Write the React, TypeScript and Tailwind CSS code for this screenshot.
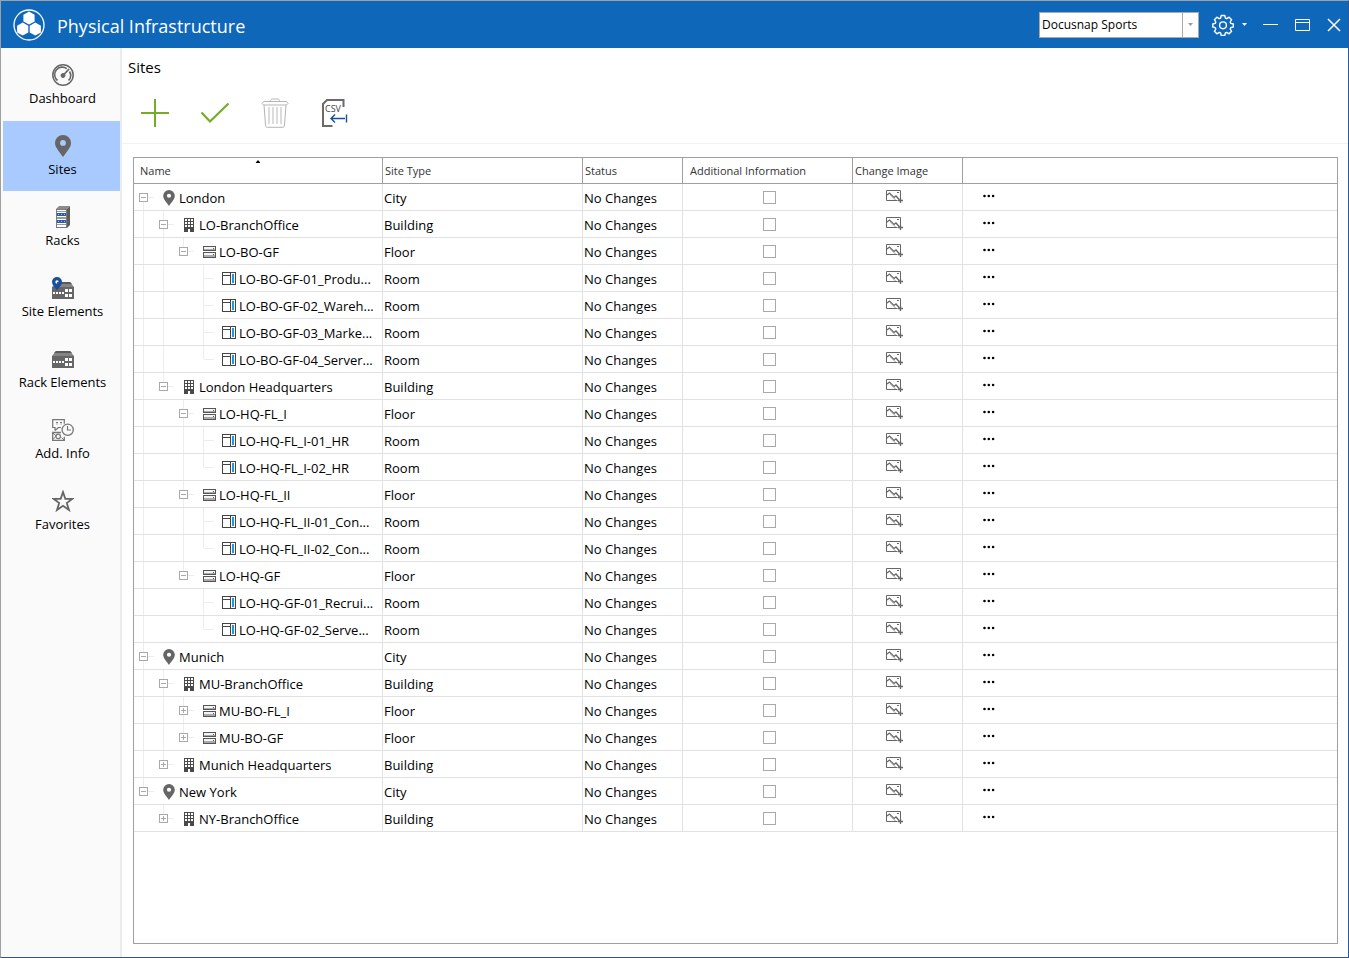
import type { ReactNode } from "react"
import clsx from "clsx"

type Kind = "City" | "Building" | "Floor" | "Room"

interface Site {
  name: string
  kind: Kind
  level: number
  expanded?: boolean
}

const sites: Site[] = [
  { name: "London", kind: "City", level: 0, expanded: true },
  { name: "LO-BranchOffice", kind: "Building", level: 1, expanded: true },
  { name: "LO-BO-GF", kind: "Floor", level: 2, expanded: true },
  { name: "LO-BO-GF-01_Produ...", kind: "Room", level: 3 },
  { name: "LO-BO-GF-02_Wareh...", kind: "Room", level: 3 },
  { name: "LO-BO-GF-03_Marke...", kind: "Room", level: 3 },
  { name: "LO-BO-GF-04_Server...", kind: "Room", level: 3 },
  { name: "London Headquarters", kind: "Building", level: 1, expanded: true },
  { name: "LO-HQ-FL_I", kind: "Floor", level: 2, expanded: true },
  { name: "LO-HQ-FL_I-01_HR", kind: "Room", level: 3 },
  { name: "LO-HQ-FL_I-02_HR", kind: "Room", level: 3 },
  { name: "LO-HQ-FL_II", kind: "Floor", level: 2, expanded: true },
  { name: "LO-HQ-FL_II-01_Con...", kind: "Room", level: 3 },
  { name: "LO-HQ-FL_II-02_Con...", kind: "Room", level: 3 },
  { name: "LO-HQ-GF", kind: "Floor", level: 2, expanded: true },
  { name: "LO-HQ-GF-01_Recrui...", kind: "Room", level: 3 },
  { name: "LO-HQ-GF-02_Serve...", kind: "Room", level: 3 },
  { name: "Munich", kind: "City", level: 0, expanded: true },
  { name: "MU-BranchOffice", kind: "Building", level: 1, expanded: true },
  { name: "MU-BO-FL_I", kind: "Floor", level: 2, expanded: false },
  { name: "MU-BO-GF", kind: "Floor", level: 2, expanded: false },
  { name: "Munich Headquarters", kind: "Building", level: 1, expanded: false },
  { name: "New York", kind: "City", level: 0, expanded: true },
  { name: "NY-BranchOffice", kind: "Building", level: 1, expanded: false },
]

// true when a later sibling follows on the given level
function continues(index: number, level: number) {
  for (let i = index + 1; i < sites.length; i++) {
    if (sites[i].level < level) return false
    if (sites[i].level === level) return true
  }
  return false
}

function Logo() {
  return (
    <svg width="32" height="32" viewBox="0 0 32 32" aria-hidden="true">
      <circle cx="16" cy="16" r="15" fill="none" stroke="#fff" strokeWidth="1.3" />
      <g fill="#fff">
        <path d="M16 2.6l5.6 3.2v6.6L16 15.6l-5.6-3.2V5.800z" />
        <path d="M9.700 13.600l5.600 3.200v6.600l-5.600 3.200-5.600-3.200v-6.600z" />
        <path d="M22.300 13.600l5.600 3.200v6.600l-5.600 3.200-5.600-3.200v-6.600z" />
      </g>
    </svg>
  )
}

function GearIcon() {
  return (
    <svg width="22" height="22" viewBox="0 0 22 22" fill="none" stroke="#fff" strokeWidth="1.4" strokeLinejoin="round" aria-hidden="true">
      <path d="M9.200 1.500h3.600l.6 2.600 1.400.6 2.300-1.500 2.500 2.500-1.400 2.300.6 1.400 2.500.6v3l-2.500.6-.6 1.400 1.400 2.300-2.500 2.500-2.300-1.400-1.400.6-.6 2.500H9.200l-.6-2.500-1.400-.6-2.300 1.400-2.500-2.500 1.400-2.300-.6-1.400-2.400-.6v-3l2.400-.6.6-1.400-1.400-2.300 2.500-2.500 2.300 1.500 1.400-.6z" />
      <circle cx="11" cy="11.300" r="3.400" />
    </svg>
  )
}

function PinIcon({ className }: { className?: string }) {
  return (
    <svg className={className} viewBox="0 0 16 22" fill="#666" aria-hidden="true">
      <path fillRule="evenodd" d="M8 0a8 8 0 0 1 8 8c0 4.500-4.500 9-8 14C4.500 17 0 12.500 0 8a8 8 0 0 1 8-8zm0 5a2.900 2.900 0 1 0 0 5.800A2.900 2.900 0 0 0 8 5z" />
    </svg>
  )
}

function DashboardIcon() {
  return (
    <svg width="22" height="22" viewBox="0 0 22 22" fill="none" stroke="#666" aria-hidden="true">
      <circle cx="11" cy="11" r="10.200" strokeWidth="1.500" />
      <path d="M5.500 16.500A7.400 7.400 0 0 1 14.800 4.700M17.500 7.500a7.400 7.400 0 0 1-1 9" strokeWidth="1.600" />
      <path d="M11 11.500L17 5" strokeWidth="1.800" />
      <circle cx="11" cy="11.500" r="2" fill="#666" strokeWidth="1" />
    </svg>
  )
}

function RacksIcon() {
  return (
    <svg width="16" height="22" viewBox="0 0 16 22" aria-hidden="true">
      <path d="M1 3l3-3h11l-3 3z" fill="#8c8c8c" />
      <path d="M12 3l3-3v19l-3 3z" fill="#5c5c5c" />
      <path d="M1 3h11v19H1z" fill="#7a7a7a" />
      <path d="M2 4h9v17H2z" fill="#fff" />
      <path d="M2 7h9v3H2zM2 14h9v3H2z" fill="#2b5caa" />
      <path d="M3 8h1v1H3zM6 8h1v1H6zM9 8h1v1H9zM3 15h1v1H3zM6 15h1v1H6zM9 15h1v1H9z" fill="#9dbbe8" />
      <path d="M2 5h9v1H2zM2 11h9v2H2zM2 18h9v1H2z" fill="#999" />
    </svg>
  )
}

function DeviceShape() {
  return (
    <>
      <path d="M0 9l4-5h14l4 5z" fill="#858585" />
      <path d="M4 4h14l2 2H2z" fill="#5a5a5a" />
      <path d="M0 9h22v12H0z" fill="#666" />
      <path d="M1 14h2v2H1zM4 14h2v2H4zM7 14h2v2H7zM10 14h2v2h-2zM13 11h3v3h-3zM17 11h3v3h-3zM13 16h3v3h-3zM17 16h3v3h-3z" fill="#fff" />
    </>
  )
}

function SiteElementsIcon() {
  return (
    <svg width="22" height="22" viewBox="0 0 22 22" aria-hidden="true">
      <g transform="translate(0 1)">
        <DeviceShape />
      </g>
      <path d="M0 0h5v9H0z" fill="#fafafa" />
      <path fillRule="evenodd" d="M5 0a5 5 0 0 1 5 5c0 3-3 5.500-5 8.500C3 10.500 0 8 0 5a5 5 0 0 1 5-5zm0 3.300a1.700 1.700 0 1 0 0 3.400 1.700 1.700 0 0 0 0-3.400z" fill="#174f9e" />
    </svg>
  )
}

function RackElementsIcon() {
  return (
    <svg width="22" height="22" viewBox="0 0 22 22" aria-hidden="true">
      <g transform="translate(0 -1)">
        <DeviceShape />
      </g>
    </svg>
  )
}

function AddInfoIcon() {
  return (
    <svg width="22" height="22" viewBox="0 0 22 22" fill="none" stroke="#777" aria-hidden="true">
      <path d="M3 11.500V8.500H.7V.7h11.600v4M6.500 8.500L3 11.500M6.500 8.500H9" strokeWidth="1.200" />
      <path d="M4 3.500h2M8 3.500h2M4.500 5h1M8.500 5h1" />
      <path d="M9 13.500H.7v7.800h11.600v-3.500" strokeWidth="1.300" />
      <path d="M1 14l3 3-3 3.500M12 21l-2.500-2.500" />
      <circle cx="6.200" cy="17.400" r="2.200" strokeWidth="1.200" />
      <circle cx="15.700" cy="10.800" r="5.600" fill="#fafafa" strokeWidth="1.300" />
      <path d="M15.500 7v4h3.500" strokeWidth="1.200" />
    </svg>
  )
}

function StarIcon() {
  return (
    <svg width="22" height="22" viewBox="0 0 22 22" fill="none" stroke="#666" strokeWidth="1.800" aria-hidden="true">
      <path d="M11 2l2.300 6.800h7.200l-5.700 4.200 2.200 7L11 15.800 5 20l2.200-7-5.700-4.200h7.200z" />
    </svg>
  )
}

function BuildingIcon() {
  return (
    <svg width="10" height="14" viewBox="0 0 10 14" shapeRendering="crispEdges" aria-hidden="true">
      <path d="M0 0h10v14H0z" fill="#4a4a4a" />
      <path d="M1 1h2v2H1zM4 1h2v2H4zM7 1h2v2H7zM1 4h2v2H1zM4 4h2v2H4zM7 4h2v2H7zM1 7h2v2H1zM4 7h2v2H4zM7 7h2v2H7zM4 11h2v3H4z" fill="#fff" />
    </svg>
  )
}

function FloorIcon() {
  return (
    <svg width="13" height="12" viewBox="0 0 13 12" shapeRendering="crispEdges" aria-hidden="true">
      <path d="M0 0h13v5H0zM0 6h13v6H0z" fill="#555" />
      <path d="M1 1h11v2H1zM1 7h11v2H1z" fill="#f4f4f4" />
      <path d="M1 3h11v1H1zM1 9h11v2H1z" fill="#aaa" />
      <path d="M10 2h1v1h-1zM10 8h1v1h-1z" fill="#555" />
    </svg>
  )
}

function RoomIcon() {
  return (
    <svg width="14" height="13" viewBox="0 0 14 13" shapeRendering="crispEdges" aria-hidden="true">
      <path d="M0 0h14v13H0z" fill="#444" />
      <path d="M1 1h7v2H1zM1 4h7v8H1zM9 1h4v11H9z" fill="#fff" />
      <path d="M10 2h2v9h-2z" fill="#1a9be0" />
    </svg>
  )
}

function ImageIcon() {
  return (
    <svg width="17" height="14" viewBox="0 0 17 14" fill="none" stroke="#666" aria-hidden="true">
      <path d="M11.500 10.500H.5V.5h14v8" />
      <path d="M1 5l2.500-2L8 7.500l2-1.500 3.500 4" strokeWidth="1.300" />
      <path d="M4.500 5l5 5" stroke="#999" />
      <path d="M11 2.500h2" />
      <path d="M12 10.500h5M14.500 8v5" strokeWidth="1.300" />
    </svg>
  )
}

function KindIcon({ kind }: { kind: Kind }) {
  if (kind === "City") return <PinIcon className="h-4 w-3" />
  if (kind === "Building") return <BuildingIcon />
  if (kind === "Floor") return <FloorIcon />
  return <RoomIcon />
}

const navItems: { label: string; icon: ReactNode; active?: boolean }[] = [
  { label: "Dashboard", icon: <DashboardIcon /> },
  { label: "Sites", icon: <PinIcon className="h-[22px] w-4" />, active: true },
  { label: "Racks", icon: <RacksIcon /> },
  { label: "Site Elements", icon: <SiteElementsIcon /> },
  { label: "Rack Elements", icon: <RackElementsIcon /> },
  { label: "Add. Info", icon: <AddInfoIcon /> },
  { label: "Favorites", icon: <StarIcon /> },
]

function TitleBar() {
  return (
    <header className="flex h-[47px] shrink-0 items-center bg-[#0f67ba] pr-1.5 pl-3 text-white">
      <Logo />
      <h1 className="ml-3 pt-0.5 text-lg">Physical Infrastructure</h1>
      <div className="ml-auto flex items-center">
        <div className="relative">
          <select
            aria-label="Company"
            className="block h-[26px] w-40 appearance-none border border-[#a9a9a9] bg-white pl-0.5 text-xs text-black"
          >
            <option>Docusnap Sports</option>
          </select>
          <span className="pointer-events-none absolute inset-y-0 right-0 flex w-[17px] items-center justify-center border border-[#a9a9a9]">
            <svg width="5" height="3" viewBox="0 0 5 3" fill="#999" aria-hidden="true">
              <path d="M0 0h5L2.500 3z" />
            </svg>
          </span>
        </div>
        <button type="button" aria-label="Settings" className="ml-[13px] flex items-center gap-2">
          <GearIcon />
          <svg width="5" height="3" viewBox="0 0 5 3" fill="#fff" aria-hidden="true">
            <path d="M0 0h5L2.500 3z" />
          </svg>
        </button>
        <button type="button" aria-label="Minimize" className="ml-[15px]">
          <svg width="16" height="16" viewBox="0 0 16 16" stroke="#fff" aria-hidden="true">
            <path d="M1 7.500h15" />
          </svg>
        </button>
        <button type="button" aria-label="Maximize" className="ml-4">
          <svg width="16" height="16" viewBox="0 0 16 16" fill="none" stroke="#fff" aria-hidden="true">
            <path d="M1.500 2.500h14v11h-14zM1.500 5.500h14" />
          </svg>
        </button>
        <button type="button" aria-label="Close" className="ml-4">
          <svg width="16" height="16" viewBox="0 0 16 16" stroke="#fff" strokeWidth="1.500" aria-hidden="true">
            <path d="M2 2l12 12M14 2L2 14" />
          </svg>
        </button>
      </div>
    </header>
  )
}

function Sidebar() {
  return (
    <nav className="flex w-[121px] shrink-0 flex-col gap-px border-r-2 border-[#ececec] bg-[#fafafa] pt-0.5 pl-0.5">
      {navItems.map((item) => (
        <button
          key={item.label}
          type="button"
          className={clsx("flex h-[70px] flex-col items-center pt-3.5 pl-0.5 text-[13px]", item.active && "bg-[#a9caff]")}
        >
          <span className="flex h-[22px] items-center">{item.icon}</span>
          <span className="mt-0.5 leading-5 whitespace-nowrap">{item.label}</span>
        </button>
      ))}
    </nav>
  )
}

function Toolbar() {
  return (
    <div className="flex gap-7 border-b border-[#f2f2f2] pt-[18px] pb-3.5 pl-[17px]">
      <button type="button" aria-label="Add">
        <svg width="32" height="32" viewBox="0 0 32 32" fill="#76ac24" aria-hidden="true">
          <path d="M2 15h28v2H2z" />
          <path d="M15 2h2v28h-2z" />
        </svg>
      </button>
      <button type="button" aria-label="Apply">
        <svg width="32" height="32" viewBox="0 0 32 32" fill="none" stroke="#76ac24" strokeWidth="2.200" aria-hidden="true">
          <path d="M2.500 15.500l8.500 9L29.500 6.500" />
        </svg>
      </button>
      <button type="button" aria-label="Delete">
        <svg width="32" height="32" viewBox="0 0 32 32" fill="none" stroke="#b5b5b5" aria-hidden="true">
          <path d="M3 6.500l1.500-2h23l1.500 2-1.500 1.500h-23zM11.500 4.500c0-1.500.5-2.500 2-2.500h5c1.500 0 2 1 2 2.500" />
          <path d="M5 8l1.500 20c.1 1.500.7 2.300 2 2.300h15c1.300 0 1.900-.8 2-2.300L27 8" />
          <path d="M10 10v17M14 10v17M18 10v17M22 10v17" stroke="#dcdcdc" strokeWidth="2" />
        </svg>
      </button>
      <button type="button" aria-label="Export CSV">
        <svg width="32" height="32" viewBox="0 0 32 32" fill="none" aria-hidden="true">
          <path d="M24.500 10V3H8L4 7v22h9.500" stroke="#6b6b6b" strokeWidth="2" />
          <text x="6" y="14.500" fontSize="9" fill="#444" fontFamily="Open Sans, sans-serif">CSV</text>
          <path d="M12 21.500h14M16 17.500l-4 4 4 4M27.500 17.500v8" stroke="#174f9e" strokeWidth="1.400" />
        </svg>
      </button>
    </div>
  )
}

function Guide({ up, down, stub }: { up: boolean; down: boolean; stub?: boolean }) {
  return (
    <svg width="20" height="26" viewBox="0 0 20 26" stroke="#ededed" className="shrink-0 overflow-visible" shapeRendering="crispEdges" aria-hidden="true">
      {up && <path d="M9.500 0v13" />}
      {down && <path d="M9.500 13v14" />}
      {stub && <path d="M9.500 13.500H20" />}
    </svg>
  )
}

function ExpandButton({ site }: { site: Site }) {
  return (
    <button
      type="button"
      aria-label={site.expanded ? `Collapse ${site.name}` : `Expand ${site.name}`}
      className="absolute top-2 left-1"
    >
      <svg width="11" height="11" viewBox="0 0 11 11" fill="#fff" stroke="#a9a9a9" shapeRendering="crispEdges" aria-hidden="true">
        <path d="M1.500 1.500h8v8h-8z" />
        <path d="M3 5.500h5" />
        {!site.expanded && <path d="M5.500 3v5" />}
      </svg>
    </button>
  )
}

function NameCell({ site, index }: { site: Site; index: number }) {
  return (
    <div className="flex items-center overflow-hidden">
      {Array.from({ length: site.level }, (_, level) => {
        const on = continues(index, level)
        return <Guide key={level} up={on} down={on} />
      })}
      <span className="relative shrink-0">
        <Guide up={index > 0} down={continues(index, site.level)} stub />
        {site.expanded !== undefined && <ExpandButton site={site} />}
      </span>
      <span className="ml-[5px] flex w-5 shrink-0 items-center justify-center pt-px">
        <KindIcon kind={site.kind} />
      </span>
      <span className="pt-0.5 leading-5 whitespace-nowrap">{site.name}</span>
    </div>
  )
}

const headCell = "h-[26px] border-b border-[#a0a0a0] pb-0 pt-0.5 text-left text-[11px] font-normal text-[#333]"
const bodyCell = "h-[27px] border-b border-[#e1e1e1] p-0"
const textCell = "border-r pt-0.5 pl-px leading-5"

function SitesTable() {
  return (
    <table className="w-full table-fixed border-separate border-spacing-0 text-[13px]">
      <colgroup>
        <col className="w-[249px]" />
        <col className="w-[200px]" />
        <col className="w-[100px]" />
        <col className="w-[170px]" />
        <col className="w-[110px]" />
        <col />
      </colgroup>
      <thead>
        <tr>
          <th className={clsx(headCell, "relative border-r pl-1.5")} aria-sort="ascending">
            Name
            <svg className="absolute top-0.5 left-1/2 -translate-x-1/2" width="5" height="3" viewBox="0 0 5 3" aria-hidden="true">
              <path d="M0 3h5L2.500 0z" />
            </svg>
          </th>
          <th className={clsx(headCell, "border-r pl-0.5")}>Site Type</th>
          <th className={clsx(headCell, "border-r pl-0.5")}>Status</th>
          <th className={clsx(headCell, "border-r pl-[7px]")}>Additional Information</th>
          <th className={clsx(headCell, "border-r pl-0.5")}>Change Image</th>
          <th className={headCell} aria-label="Actions" />
        </tr>
      </thead>
      <tbody>
        {sites.map((site, index) => (
          <tr key={site.name}>
            <td className={clsx(bodyCell, "border-r")}>
              <NameCell site={site} index={index} />
            </td>
            <td className={clsx(bodyCell, textCell)}>{site.kind}</td>
            <td className={clsx(bodyCell, textCell)}>No Changes</td>
            <td className={clsx(bodyCell, "border-r pl-1")}>
              <input
                type="checkbox"
                aria-label={`Additional information for ${site.name}`}
                className="mx-auto block size-[13px] appearance-none border border-[#a9a9a9] bg-white checked:bg-[#0f67ba]"
              />
            </td>
            <td className={clsx(bodyCell, "border-r pl-[33px]")}>
              <button type="button" aria-label={`Change image of ${site.name}`} className="block">
                <ImageIcon />
              </button>
            </td>
            <td className={clsx(bodyCell, "pb-0.5 pl-5")}>
              <button type="button" aria-label={`More actions for ${site.name}`} className="block">
                <svg width="12" height="6" viewBox="0 0 12 6" aria-hidden="true">
                  <circle cx="1.500" cy="3" r="1.300" />
                  <circle cx="5.800" cy="3" r="1.300" />
                  <circle cx="10.100" cy="3" r="1.300" />
                </svg>
              </button>
            </td>
          </tr>
        ))}
      </tbody>
    </table>
  )
}

export default function App() {
  return (
    <div className="flex min-h-screen flex-col border border-t-[#a0a0a0] border-r-[#2b579a] border-b-[#2b579a] border-l-[#a0a0a0] bg-white font-['Open_Sans',sans-serif] text-black">
      <TitleBar />
      <div className="flex flex-1">
        <Sidebar />
        <main className="flex min-w-0 flex-1 flex-col">
          <h2 className="pt-[7px] pl-1.5 text-[15px] leading-6">Sites</h2>
          <Toolbar />
          <section className="mt-[13px] mr-[10px] mb-[13px] ml-[11px] flex-1 border border-[#a0a0a0]">
            <SitesTable />
          </section>
        </main>
      </div>
    </div>
  )
}
